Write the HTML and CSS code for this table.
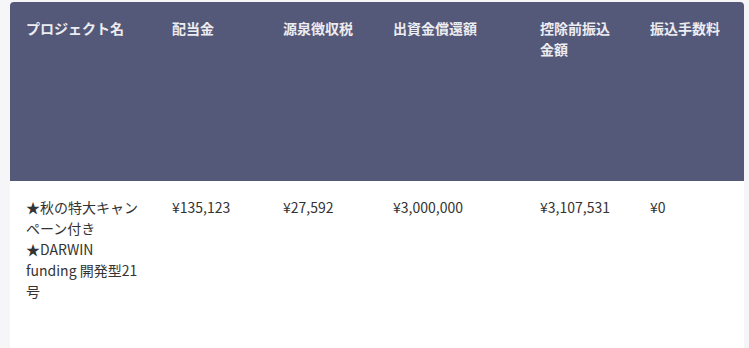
FILE: index.html
```html
<!DOCTYPE html>
<html lang="ja">
<head>
<meta charset="utf-8">
<link rel="stylesheet" href="styles.css">
</head>
<body>
<div class="wrap">
<table class="tbl">
  <colgroup>
    <col class="c1"><col class="c2"><col class="c3"><col class="c4"><col class="c5"><col class="c6">
  </colgroup>
  <thead>
    <tr>
      <th>プロジェクト名</th>
      <th>配当金</th>
      <th>源泉徴収税</th>
      <th>出資金償還額</th>
      <th>控除前振込<br>金額</th>
      <th>振込手数料</th>
    </tr>
  </thead>
  <tbody>
    <tr>
      <td>★秋の特大キャンペーン付き<br>★DARWIN funding 開発型21号</td>
      <td>¥135,123</td>
      <td>¥27,592</td>
      <td>¥3,000,000</td>
      <td>¥3,107,531</td>
      <td>¥0</td>
    </tr>
  </tbody>
</table>
</div>
</body>
</html>
```

FILE: styles.css
```css
html, body {
  margin: 0;
  padding: 0;
  background: #f6f6f8;
}
body {
  font-family: "Noto Sans CJK JP", "Noto Sans", sans-serif;
  font-size: 14px;
  line-height: 21px;
  color: #333;
}
.wrap {
  padding: 2px 5px 0 10px;
}
.tbl {
  width: 734px;
  border-collapse: separate;
  border-spacing: 0;
  table-layout: fixed;
  background: #fff;
  border-radius: 4px 4px 0 0;
}
.c1 { width: 146px; }
.c2 { width: 111px; }
.c3 { width: 110px; }
.c4 { width: 147px; }
.c5 { width: 110px; }
.c6 { width: 110px; }
.tbl th {
  background: #545979;
  color: #ececf1;
  font-weight: 700;
  text-align: left;
  vertical-align: top;
  padding: 16px 16px 0 16px;
  height: 163px;
}
.tbl th:first-child { border-top-left-radius: 4px; }
.tbl th:last-child { border-top-right-radius: 4px; }
.tbl td {
  vertical-align: top;
  padding: 16px 16px 46px 16px;
}
```
